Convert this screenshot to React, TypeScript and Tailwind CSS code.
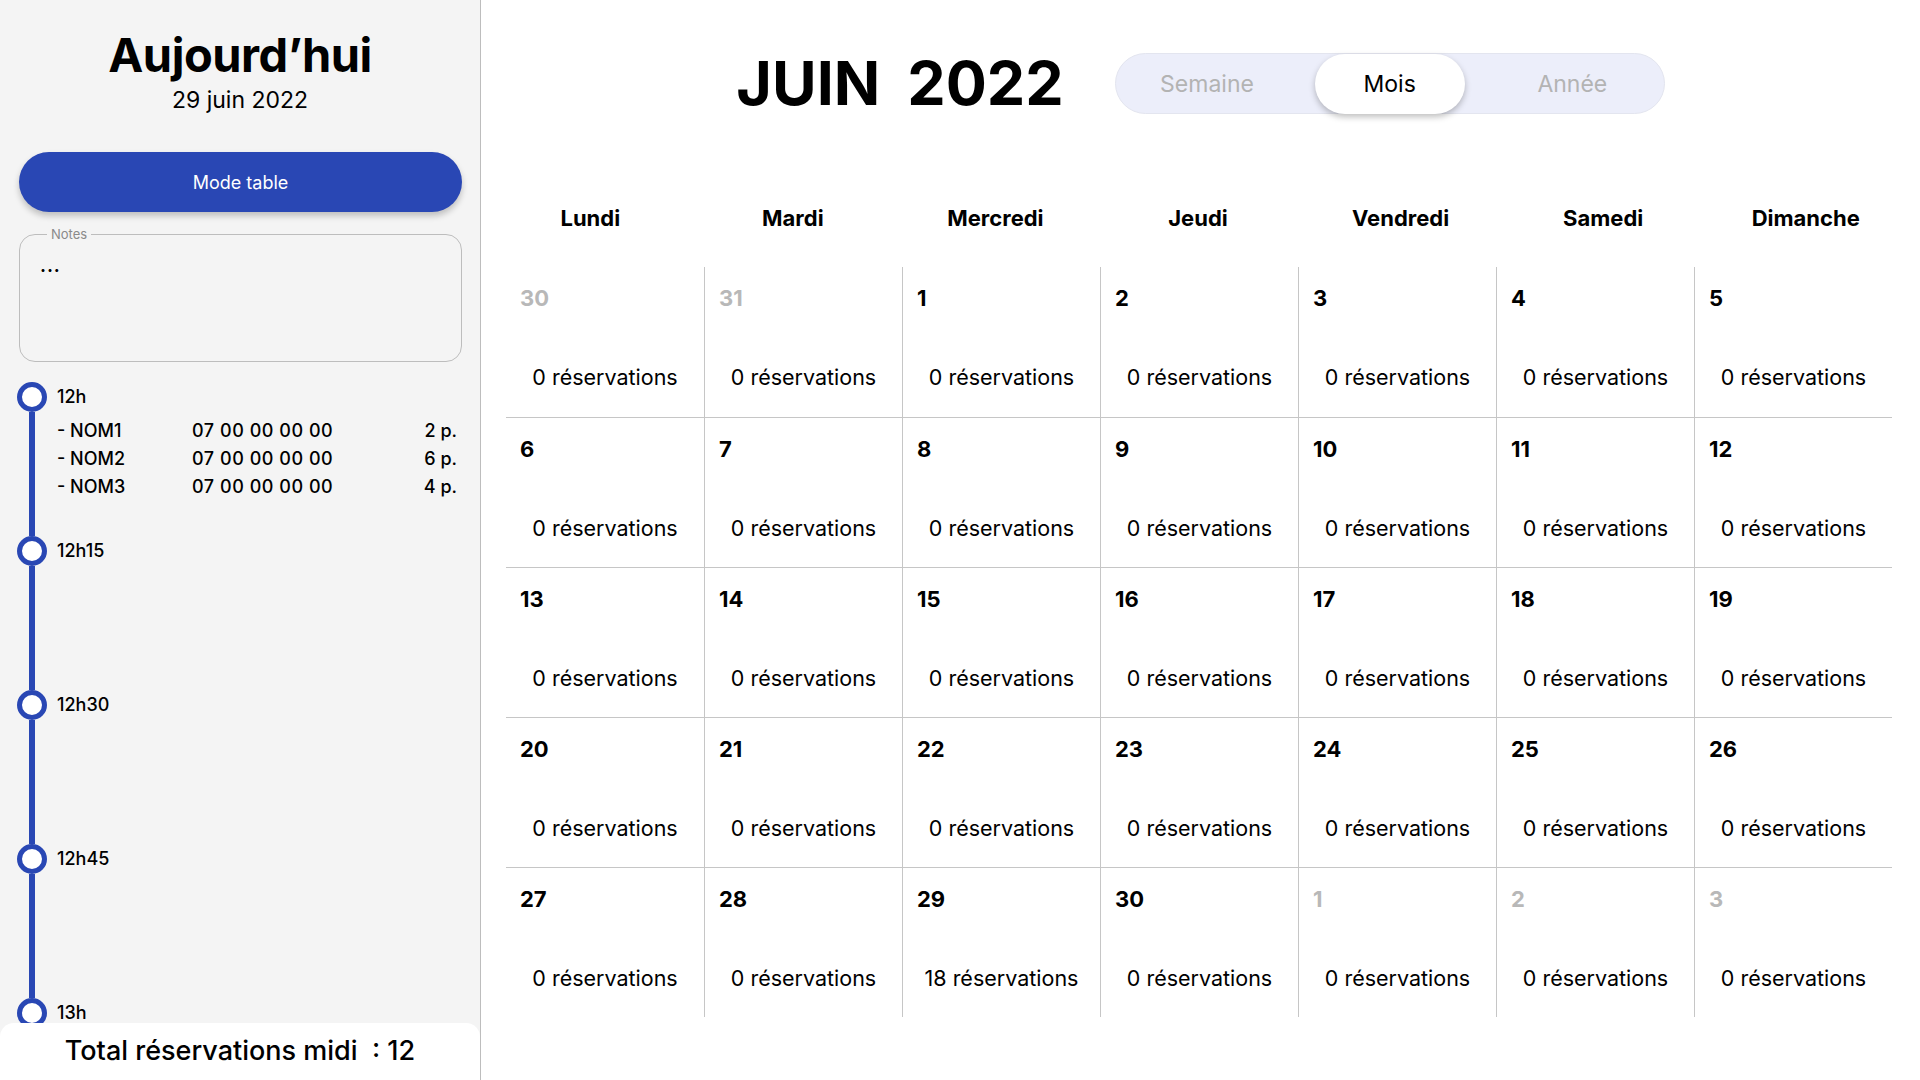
const blue = "bg-[#2947b4]";

type Booking = { name: string; phone: string; size: string };

const slots: { time: string; bookings: Booking[] }[] = [
  {
    time: "12h",
    bookings: [
      { name: "- NOM1", phone: "07 00 00 00 00", size: "2 p." },
      { name: "- NOM2", phone: "07 00 00 00 00", size: "6 p." },
      { name: "- NOM3", phone: "07 00 00 00 00", size: "4 p." },
    ],
  },
  { time: "12h15", bookings: [] },
  { time: "12h30", bookings: [] },
  { time: "12h45", bookings: [] },
  { time: "13h", bookings: [] },
];

const weekdays = ["Lundi", "Mardi", "Mercredi", "Jeudi", "Vendredi", "Samedi", "Dimanche"];

type Day = { n: number; muted?: boolean; count?: number };

const days: Day[] = [
  { n: 30, muted: true },
  { n: 31, muted: true },
  ...Array.from({ length: 30 }, (_, i) => ({ n: i + 1, count: i + 1 === 29 ? 18 : 0 })),
  { n: 1, muted: true },
  { n: 2, muted: true },
  { n: 3, muted: true },
];

function Sidebar() {
  return (
    <aside className="flex h-full w-[481px] shrink-0 flex-col border-r border-[#bdbdbd] bg-[#f4f4f4]">
      <div className="pt-[27px] text-center">
        <h1 className="text-[47px] leading-[56px] font-bold tracking-[-0.01em] text-black">Aujourd’hui</h1>
        <p className="mt-[2px] text-[23px] leading-[30px] text-black">29 juin 2022</p>
      </div>

      <button
        type="button"
        className={`mt-[37px] ml-[19px] h-[60px] w-[443px] rounded-full ${blue} text-[18px] text-white shadow-[0_4px_6px_rgba(0,0,0,0.22)]`}
      >
        Mode table
      </button>

      <fieldset className="mt-[14px] ml-[19px] h-[136px] w-[443px] rounded-[16px] border border-[#bdbdbd] px-[20px]">
        <legend className="ml-[7px] px-[4px] text-[13px] leading-[16px] text-[#8a8a8a]">Notes</legend>
        <p className="mt-[14px] text-[18px] leading-[20px] font-bold tracking-[0.05em] text-black">...</p>
      </fieldset>

      <div className="mt-[20px] flex-1 overflow-hidden pl-[17px] pr-[23px]">
        {slots.map((slot) => (
          <div key={slot.time} className="flex h-[154px]">
            <div className="flex w-[30px] shrink-0 flex-col items-center">
              <span className="h-[30px] w-[30px] shrink-0 rounded-full border-[5px] border-[#2947b4] bg-white" />
              <span className={`w-[6px] flex-1 ${blue}`} />
            </div>
            <div className="flex-1 pl-[10px]">
              <div className="mt-[5px] text-[18px] leading-[20px] font-medium text-black">{slot.time}</div>
              {slot.bookings.length > 0 && (
                <div className="mt-[10px]">
                  {slot.bookings.map((b) => (
                    <div key={b.name} className="flex text-[18px] leading-[28px] font-medium text-black">
                      <span className="w-[135px]">{b.name}</span>
                      <span className="flex-1 tracking-[0.03em]">{b.phone}</span>
                      <span className="text-right">{b.size}</span>
                    </div>
                  ))}
                </div>
              )}
            </div>
          </div>
        ))}
      </div>

      <div className="flex h-[57px] shrink-0 items-center justify-center rounded-t-[14px] bg-white text-[27px] font-medium text-black">
        Total réservations midi&nbsp; : 12
      </div>
    </aside>
  );
}

function ViewSwitch() {
  return (
    <div className="grid h-[61px] w-[550px] grid-cols-3 items-center rounded-full border border-[#e3e5ef] bg-[#eceefa] text-[23px]">
      <span className="text-center text-[#b3b3b3]">Semaine</span>
      <span className="mx-auto flex h-[60px] w-[150px] items-center justify-center rounded-full bg-white text-black shadow-[0_3px_6px_rgba(0,0,0,0.25)]">
        Mois
      </span>
      <span className="text-center text-[#b3b3b3]">Année</span>
    </div>
  );
}

function Calendar() {
  return (
    <main className="flex-1 bg-white pt-[53px]">
      <div className="flex items-center justify-center gap-[51px]">
        <h2 className="flex gap-[27px] text-[61px] leading-[61px] font-bold text-black">
          <span>JUIN</span>
          <span>2022</span>
        </h2>
        <ViewSwitch />
      </div>

      <div className="mt-[90px] ml-[8px] grid w-[1418px] grid-cols-7 text-center text-[22px] leading-[28px] font-bold text-black">
        {weekdays.map((d) => (
          <span key={d}>{d}</span>
        ))}
      </div>

      <div className="mt-[35px] ml-[25px] grid w-[1386px] grid-cols-7">
        {days.map((d, i) => {
          const col = i % 7;
          const row = Math.floor(i / 7);
          const edge =
            col > 0 && row > 0
              ? "border-l border-t"
              : col > 0
                ? "border-l"
                : row > 0
                  ? "border-t"
                  : "";
          return (
            <div key={i} className={`h-[150px] border-[#c6c6c6] pt-[17px] pl-[14px] ${edge}`}>
              <div
                className={`text-[22px] leading-[28px] font-bold ${d.muted ? "text-[#b8b8b8]" : "text-black"}`}
              >
                {d.n}
              </div>
              <div className="mt-[51px] pr-[14px] text-center text-[21.5px] leading-[28px] text-black">
                {d.count ?? 0} réservations
              </div>
            </div>
          );
        })}
      </div>
    </main>
  );
}

export default function App() {
  return (
    <div className="flex h-[1080px] w-[1920px] overflow-hidden font-['Inter','Noto_Sans',sans-serif]">
      <Sidebar />
      <Calendar />
    </div>
  );
}
